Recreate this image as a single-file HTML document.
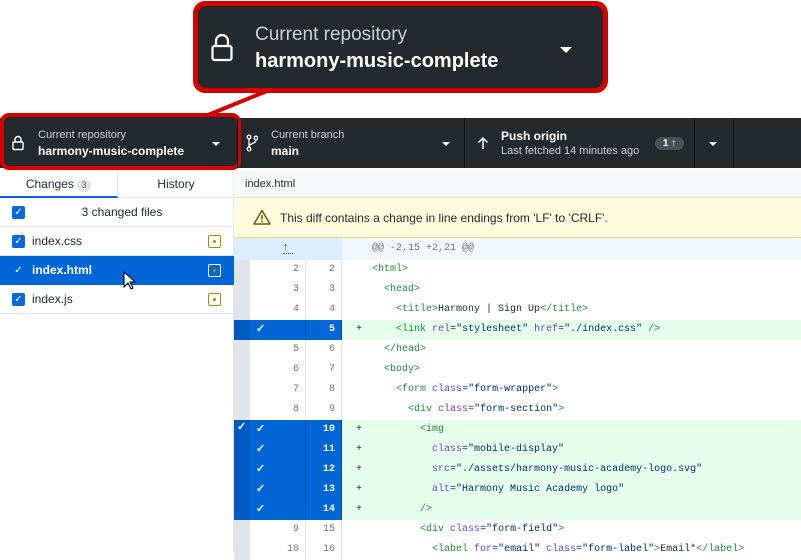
<!DOCTYPE html>
<html><head><meta charset="utf-8"><style>
*{margin:0;padding:0;box-sizing:border-box}
body{width:801px;height:550px;background:#fff;position:relative;overflow:hidden;font-family:"Liberation Sans",sans-serif;color:#24292e}
.abs{position:absolute}
.tb{left:0;top:118px;width:801px;height:50px;background:#24292e}
.sep{position:absolute;top:118px;width:1px;height:50px;background:#111}
.lbl{font-size:11px;color:#c9d1d9}
.val{font-size:12px;font-weight:bold;color:#fff}
.caret{width:0;height:0;border-left:4px solid transparent;border-right:4px solid transparent;border-top:4px solid #fff}
.mono{font-family:"Liberation Mono",monospace;font-size:10px}
.row{position:absolute;left:234px;width:567px;height:20px}
.g0{position:absolute;left:0;width:16px;height:20px;background:#e1e4e8}
.g1{position:absolute;left:16px;width:56px;height:20px;text-align:right;padding-right:6px;line-height:20px;color:#6a737d;border-right:1px solid #e1e4e8}
.g2{position:absolute;left:72px;width:36px;height:20px;text-align:right;padding-right:6px;line-height:20px;color:#6a737d;border-right:1px solid #e1e4e8}
.code{position:absolute;left:108px;right:0;height:20px;line-height:20px;padding-left:30px;white-space:pre}
.pl{position:absolute;left:14px;top:0}
.add .code{background:#e6ffed}
.add .g0,.add .g1,.add .g2{background:#0366d6;color:#fff;font-weight:bold;border-right-color:#0250b0}
.add .g0{background:#0359c2}
.t{color:#22863a}.a{color:#6f42c1}.s{color:#032f62}
.ck{position:absolute;color:#fff;font-size:11px}
.cb{position:absolute;left:12px;width:13px;height:13px;background:#0969da;border-radius:2px;color:#fff;font-size:10px;line-height:13px;text-align:center}
.fi{position:absolute;left:0;width:234px;height:29px;border-bottom:1px solid #e1e4e8;font-size:12px}
.mod{position:absolute;left:208px;top:8px;width:13px;height:13px;border:1.5px solid #b08800;border-radius:2px}
.mod:after{content:"";position:absolute;left:3.5px;top:3.5px;width:3px;height:3px;background:#b08800;border-radius:50%}
</style></head><body>

<div class="abs" style="left:193px;top:1px;width:415px;height:92px;background:#d50000;border-radius:12px"></div>
<div class="abs" style="left:198px;top:6px;width:405px;height:82px;background:#24292e;border-radius:8px"></div>
<svg class="abs" style="left:210px;top:33px" width="24" height="30" viewBox="0 0 24 30"><path d="M6 13V8a6 6 0 0 1 12 0v5" fill="none" stroke="#fff" stroke-width="2.2"/><rect x="2.5" y="13" width="19" height="14" rx="2" fill="none" stroke="#fff" stroke-width="2.2"/></svg>
<div class="abs" style="left:255px;top:24px;font-size:19px;color:#c9d1d9">Current repository</div>
<div class="abs" style="left:255px;top:50px;font-size:20px;font-weight:bold;color:#fff">harmony-music-complete</div>
<div class="abs caret" style="left:560px;top:47px;border-left-width:6px;border-right-width:6px;border-top-width:6px"></div>
<svg class="abs" style="left:195px;top:88px" width="80" height="34"><line x1="72" y1="3" x2="3" y2="31" stroke="#d50000" stroke-width="4"/></svg>

<div class="abs tb"></div>
<div class="abs" style="left:0;top:113px;width:241px;height:57px;border:4px solid #d50000;border-radius:9px;background:#24292e"></div>
<svg class="abs" style="left:12px;top:135px" width="12" height="16" viewBox="0 0 12 16"><path d="M3 7V4.5a3 3 0 0 1 6 0V7" fill="none" stroke="#fff" stroke-width="1.4"/><rect x="1" y="7" width="10" height="7.5" rx="1" fill="none" stroke="#fff" stroke-width="1.4"/></svg>
<div class="abs lbl" style="left:38px;top:129px">Current repository</div>
<div class="abs val" style="left:38px;top:144px">harmony-music-complete</div>
<div class="abs caret" style="left:212px;top:142px"></div>
<div class="sep" style="left:237px"></div>
<svg class="abs" style="left:246px;top:134px" width="12" height="18" viewBox="0 0 12 18"><circle cx="3" cy="3" r="1.8" fill="none" stroke="#fff" stroke-width="1.3"/><circle cx="3" cy="15" r="1.8" fill="none" stroke="#fff" stroke-width="1.3"/><circle cx="10" cy="4" r="1.8" fill="none" stroke="#fff" stroke-width="1.3"/><path d="M3 5v8M10 6c0 4-7 3-7 7" fill="none" stroke="#fff" stroke-width="1.3"/></svg>
<div class="abs lbl" style="left:271px;top:129px">Current branch</div>
<div class="abs val" style="left:271px;top:144px">main</div>
<div class="abs caret" style="left:442px;top:142px"></div>
<div class="sep" style="left:464px"></div>
<svg class="abs" style="left:477px;top:136px" width="12" height="14" viewBox="0 0 12 14"><path d="M6 13V2M1.5 6.5L6 2l4.5 4.5" fill="none" stroke="#fff" stroke-width="1.5"/></svg>
<div class="abs val" style="left:501px;top:129px">Push origin</div>
<div class="abs lbl" style="left:501px;top:145px">Last fetched 14 minutes ago</div>
<div class="abs" style="left:655px;top:137px;width:29px;height:13px;background:#4a5058;border-radius:7px;color:#fff;font-size:10px;font-weight:bold;line-height:13px;text-align:center">1 ↑</div>
<div class="sep" style="left:694px"></div>
<div class="abs caret" style="left:709px;top:142px"></div>
<div class="sep" style="left:733px"></div>

<div class="abs" style="left:0;top:170px;width:234px;height:380px;background:#fff;border-right:1px solid #e1e4e8"></div>
<div class="abs" style="left:0;top:170px;width:118px;height:28px;border-bottom:2px solid #0366d6;border-right:1px solid #e1e4e8;text-align:center;font-size:12px;line-height:28px">Changes <span style="display:inline-block;background:#e1e4e8;border-radius:8px;font-size:9px;width:14px;line-height:13px;color:#586069">3</span></div>
<div class="abs" style="left:118px;top:170px;width:116px;height:28px;border-bottom:1px solid #e1e4e8;text-align:center;font-size:12px;line-height:28px">History</div>
<div class="fi" style="top:198px"><div class="cb" style="top:8px">✓</div><div style="text-align:center;line-height:29px;padding-left:10px">3 changed files</div></div>
<div class="fi" style="top:227px"><div class="cb" style="top:8px">✓</div><div style="position:absolute;left:32px;line-height:29px">index.css</div><div class="mod"></div></div>
<div class="fi" style="top:256px;background:#0366d6;color:#fff;border-bottom-color:#0366d6"><div class="cb" style="top:8px;background:#0366d6">✓</div><div style="position:absolute;left:32px;line-height:29px;font-weight:bold">index.html</div><div class="mod" style="border-color:#fff"></div></div>
<svg class="abs" style="left:123px;top:271px" width="14" height="20" viewBox="0 0 14 20"><path d="M1 1v15l4-4 3 6 2-1-3-6h5z" fill="#fff" stroke="#000" stroke-width="1"/></svg>
<div class="fi" style="top:285px"><div class="cb" style="top:8px">✓</div><div style="position:absolute;left:32px;line-height:29px">index.js</div><div class="mod"></div></div>

<div class="abs" style="left:235px;top:170px;width:566px;height:28px;background:#f6f8fa;border-bottom:1px solid #e1e4e8;font-size:11px;line-height:28px;padding-left:10px">index.html</div>
<div class="abs" style="left:235px;top:198px;width:566px;height:40px;background:#fffbdd;border-bottom:1px solid #f0d87a;font-size:12px;line-height:40px;padding-left:45px">This diff contains a change in line endings from 'LF' to 'CRLF'.</div>
<svg class="abs" style="left:253px;top:209px" width="18" height="16" viewBox="0 0 18 16"><path d="M9 1.5L17 15H1z" fill="none" stroke="#735c0f" stroke-width="1.5" stroke-linejoin="round"/><path d="M9 6v4.5" stroke="#735c0f" stroke-width="1.6"/><circle cx="9" cy="12.6" r="0.9" fill="#735c0f"/></svg>
<div class="abs" style="left:234px;top:238px;width:108px;height:22px;background:#dbedff"></div>
<div class="abs" style="left:283px;top:241px;font-size:11px;color:#444">↑</div>
<div class="abs" style="left:283px;top:253px;width:10px;border-top:1px dotted #444"></div>
<div class="abs mono" style="left:342px;top:238px;width:459px;height:22px;background:#f1f8ff;line-height:22px;padding-left:30px;color:#6a737d">@@ -2,15 +2,21 @@</div>

<div class="mono">
<div class="row" style="top:260px"><div class="g0"></div><div class="g1">2</div><div class="g2">2</div><div class="code"><span class="t">&lt;html&gt;</span></div></div>
<div class="row" style="top:280px"><div class="g0"></div><div class="g1">3</div><div class="g2">3</div><div class="code">  <span class="t">&lt;head&gt;</span></div></div>
<div class="row" style="top:300px"><div class="g0"></div><div class="g1">4</div><div class="g2">4</div><div class="code">    <span class="t">&lt;title&gt;</span>Harmony | Sign Up<span class="t">&lt;/title&gt;</span></div></div>
<div class="row add" style="top:320px"><div class="g0"></div><div class="g1"><span class="ck" style="left:6px">✓</span></div><div class="g2">5</div><div class="code"><span class="pl">+</span>    <span class="t">&lt;link</span> <span class="a">rel</span>=<span class="s">"stylesheet"</span> <span class="a">href</span>=<span class="s">"./index.css"</span> <span class="t">/&gt;</span></div></div>
<div class="row" style="top:340px"><div class="g0"></div><div class="g1">5</div><div class="g2">6</div><div class="code">  <span class="t">&lt;/head&gt;</span></div></div>
<div class="row" style="top:360px"><div class="g0"></div><div class="g1">6</div><div class="g2">7</div><div class="code">  <span class="t">&lt;body&gt;</span></div></div>
<div class="row" style="top:380px"><div class="g0"></div><div class="g1">7</div><div class="g2">8</div><div class="code">    <span class="t">&lt;form</span> <span class="a">class</span>=<span class="s">"form-wrapper"</span><span class="t">&gt;</span></div></div>
<div class="row" style="top:400px"><div class="g0"></div><div class="g1">8</div><div class="g2">9</div><div class="code">      <span class="t">&lt;div</span> <span class="a">class</span>=<span class="s">"form-section"</span><span class="t">&gt;</span></div></div>
<div class="row add" style="top:420px"><div class="g0"><span class="ck" style="left:3px">✓</span></div><div class="g1"><span class="ck" style="left:6px">✓</span></div><div class="g2">10</div><div class="code"><span class="pl">+</span>        <span class="t">&lt;img</span></div></div>
<div class="row add" style="top:440px"><div class="g0"></div><div class="g1"><span class="ck" style="left:6px">✓</span></div><div class="g2">11</div><div class="code"><span class="pl">+</span>          <span class="a">class</span>=<span class="s">"mobile-display"</span></div></div>
<div class="row add" style="top:460px"><div class="g0"></div><div class="g1"><span class="ck" style="left:6px">✓</span></div><div class="g2">12</div><div class="code"><span class="pl">+</span>          <span class="a">src</span>=<span class="s">"./assets/harmony-music-academy-logo.svg"</span></div></div>
<div class="row add" style="top:480px"><div class="g0"></div><div class="g1"><span class="ck" style="left:6px">✓</span></div><div class="g2">13</div><div class="code"><span class="pl">+</span>          <span class="a">alt</span>=<span class="s">"Harmony Music Academy logo"</span></div></div>
<div class="row add" style="top:500px"><div class="g0"></div><div class="g1"><span class="ck" style="left:6px">✓</span></div><div class="g2">14</div><div class="code"><span class="pl">+</span>        <span class="t">/&gt;</span></div></div>
<div class="row" style="top:520px"><div class="g0"></div><div class="g1">9</div><div class="g2">15</div><div class="code">        <span class="t">&lt;div</span> <span class="a">class</span>=<span class="s">"form-field"</span><span class="t">&gt;</span></div></div>
<div class="row" style="top:540px"><div class="g0"></div><div class="g1">10</div><div class="g2">16</div><div class="code">          <span class="t">&lt;label</span> <span class="a">for</span>=<span class="s">"email"</span> <span class="a">class</span>=<span class="s">"form-label"</span><span class="t">&gt;</span>Email*<span class="t">&lt;/label&gt;</span></div></div>
</div>
</body></html>
